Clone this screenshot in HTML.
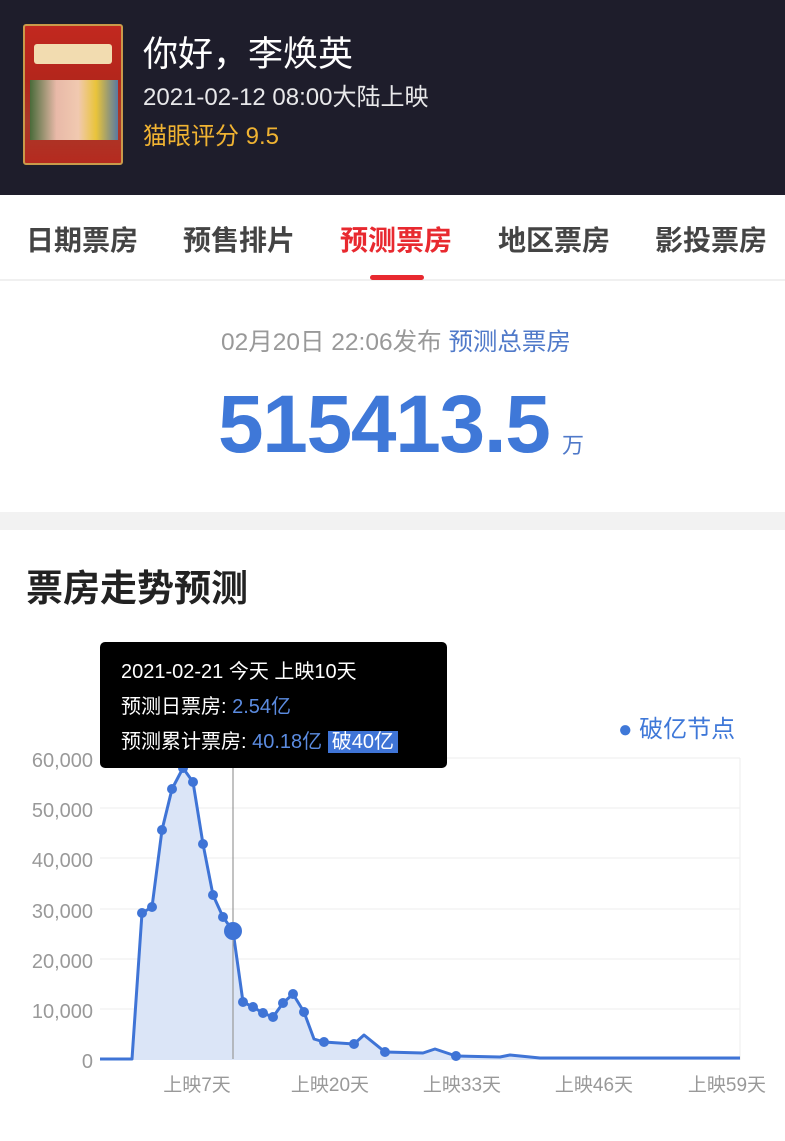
<!DOCTYPE html>
<html><head><meta charset="utf-8"><style>
*{margin:0;padding:0;box-sizing:border-box}
body{width:785px;height:1141px;position:relative;overflow:hidden;background:#fff;font-family:"Liberation Sans","Noto Sans CJK SC",sans-serif}
.a{position:absolute;white-space:nowrap}
</style></head><body>
<div class="a" style="left:0;top:0;width:785px;height:195px;background:#1e1d2b"></div>
<div class="a" style="left:23px;top:24px;width:100px;height:141px;background:linear-gradient(#c2281f,#b3261c 40%,#a93a2a 70%,#b52a1f);border:2px solid #c99a4a;border-radius:3px"></div>
<div class="a" style="left:34px;top:44px;width:78px;height:20px;background:#f2dcb0;border-radius:3px"></div>
<div class="a" style="left:30px;top:80px;width:88px;height:60px;background:linear-gradient(90deg,#4a6b3a,#e8b9a8 30%,#f1c9b0 55%,#e9c43a 75%,#5a7aa0)"></div>
<div class="a" style="left:143px;top:26px;font-size:35px;color:#fff">你好，李焕英</div>
<div class="a" style="left:143px;top:77px;font-size:24px;color:#e8e8ea">2021-02-12 08:00大陆上映</div>
<div class="a" style="left:143px;top:116px;font-size:24px;color:#f0b332">猫眼评分 9.5</div>

<div class="a" style="left:0;top:195px;width:785px;height:86px;background:#fff;border-bottom:2px solid #f0f0f0"></div>
<div class="a" style="left:26px;top:219px;font-size:28px;font-weight:bold;color:#444">日期票房</div>
<div class="a" style="left:183px;top:219px;font-size:28px;font-weight:bold;color:#444">预售排片</div>
<div class="a" style="left:340px;top:219px;font-size:28px;font-weight:bold;color:#e8292f">预测票房</div>
<div class="a" style="left:498px;top:219px;font-size:28px;font-weight:bold;color:#444">地区票房</div>
<div class="a" style="left:655px;top:219px;font-size:28px;font-weight:bold;color:#444">影投票房</div>
<div class="a" style="left:370px;top:275px;width:54px;height:5px;background:#e8292f;border-radius:3px"></div>

<div class="a" style="left:221px;top:323px;font-size:24.5px;color:#999">02月20日 22:06发布 <span style="color:#4f79c9">预测总票房</span></div>
<div class="a" style="left:218px;top:375px;font-size:82px;font-weight:bold;color:#3f78d8;letter-spacing:-1.3px;line-height:100px">515413.5</div>
<div class="a" style="left:562px;top:428px;font-size:22px;color:#4f79c9">万</div>
<div class="a" style="left:0;top:512px;width:785px;height:18px;background:#f2f2f2"></div>

<div class="a" style="left:26px;top:558px;font-size:37px;font-weight:bold;color:#222">票房走势预测</div>
<div class="a" style="left:618px;top:709px;font-size:24px;color:#3f78d8">● 破亿节点</div>

<svg class="a" style="left:0;top:740px" width="785" height="401" viewBox="0 740 785 401">
<g stroke="#eee" stroke-width="1">
<line x1="100" y1="758" x2="740" y2="758"/><line x1="100" y1="808" x2="740" y2="808"/><line x1="100" y1="858" x2="740" y2="858"/><line x1="100" y1="909" x2="740" y2="909"/><line x1="100" y1="959" x2="740" y2="959"/><line x1="100" y1="1009" x2="740" y2="1009"/><line x1="740" y1="758" x2="740" y2="1060"/>
</g>
<g font-size="20" fill="#999" text-anchor="end" font-family="Liberation Sans">
<text x="93" y="767">60,000</text><text x="93" y="817">50,000</text><text x="93" y="867">40,000</text><text x="93" y="918">30,000</text><text x="93" y="968">20,000</text><text x="93" y="1018">10,000</text><text x="93" y="1068">0</text>
</g>
<g font-size="19" fill="#999" text-anchor="middle" font-family="Liberation Sans,Noto Sans CJK SC,sans-serif">
<text x="197" y="1091">上映7天</text><text x="330" y="1091">上映20天</text><text x="462" y="1091">上映33天</text><text x="594" y="1091">上映46天</text><text x="727" y="1091">上映59天</text>
</g>
<path d="M100,1059 L132,1059 L142,913 L152,907 L162,830 L172,789 L183,768 L193,782 L203,844 L213,895 L223,917 L233,931 L243,1002 L253,1007 L263,1013 L273,1017 L283,1003 L293,994 L304,1012 L314,1039 L324,1042 L354,1044 L364,1035 L385,1052 L423,1053 L435,1049 L456,1056 L500,1057 L510,1055 L540,1058 L740,1058 L740,1060 L100,1060 Z" fill="#dbe5f7"/>
<path d="M100,1059 L132,1059 L142,913 L152,907 L162,830 L172,789 L183,768 L193,782 L203,844 L213,895 L223,917 L233,931 L243,1002 L253,1007 L263,1013 L273,1017 L283,1003 L293,994 L304,1012 L314,1039 L324,1042 L354,1044 L364,1035 L385,1052 L423,1053 L435,1049 L456,1056 L500,1057 L510,1055 L540,1058 L740,1058" fill="none" stroke="#3f74d6" stroke-width="3" stroke-linejoin="round"/>
<line x1="233" y1="765" x2="233" y2="1059" stroke="#999" stroke-width="1.2"/>
<g fill="#3f74d6">
<circle cx="142" cy="913" r="5"/><circle cx="152" cy="907" r="5"/><circle cx="162" cy="830" r="5"/><circle cx="172" cy="789" r="5"/><circle cx="183" cy="768" r="5"/><circle cx="193" cy="782" r="5"/><circle cx="203" cy="844" r="5"/><circle cx="213" cy="895" r="5"/><circle cx="223" cy="917" r="5"/><circle cx="233" cy="931" r="9"/><circle cx="243" cy="1002" r="5"/><circle cx="253" cy="1007" r="5"/><circle cx="263" cy="1013" r="5"/><circle cx="273" cy="1017" r="5"/><circle cx="283" cy="1003" r="5"/><circle cx="293" cy="994" r="5"/><circle cx="304" cy="1012" r="5"/><circle cx="324" cy="1042" r="5"/><circle cx="354" cy="1044" r="5"/><circle cx="385" cy="1052" r="5"/><circle cx="456" cy="1056" r="5"/>
</g>
</svg>

<div class="a" style="left:100px;top:642px;width:347px;height:126px;background:#000;border-radius:5px"></div>
<div class="a" style="left:121px;top:655px;font-size:20px;color:#fff">2021-02-21 今天 上映10天</div>
<div class="a" style="left:121px;top:690px;font-size:20px;color:#fff">预测日票房: <span style="color:#5b8be0">2.54亿</span></div>
<div class="a" style="left:121px;top:725px;font-size:20px;color:#fff">预测累计票房: <span style="color:#5b8be0">40.18亿</span> <span style="background:#3f74d6;color:#fff;padding:0 4px">破40亿</span></div>
</body></html>
